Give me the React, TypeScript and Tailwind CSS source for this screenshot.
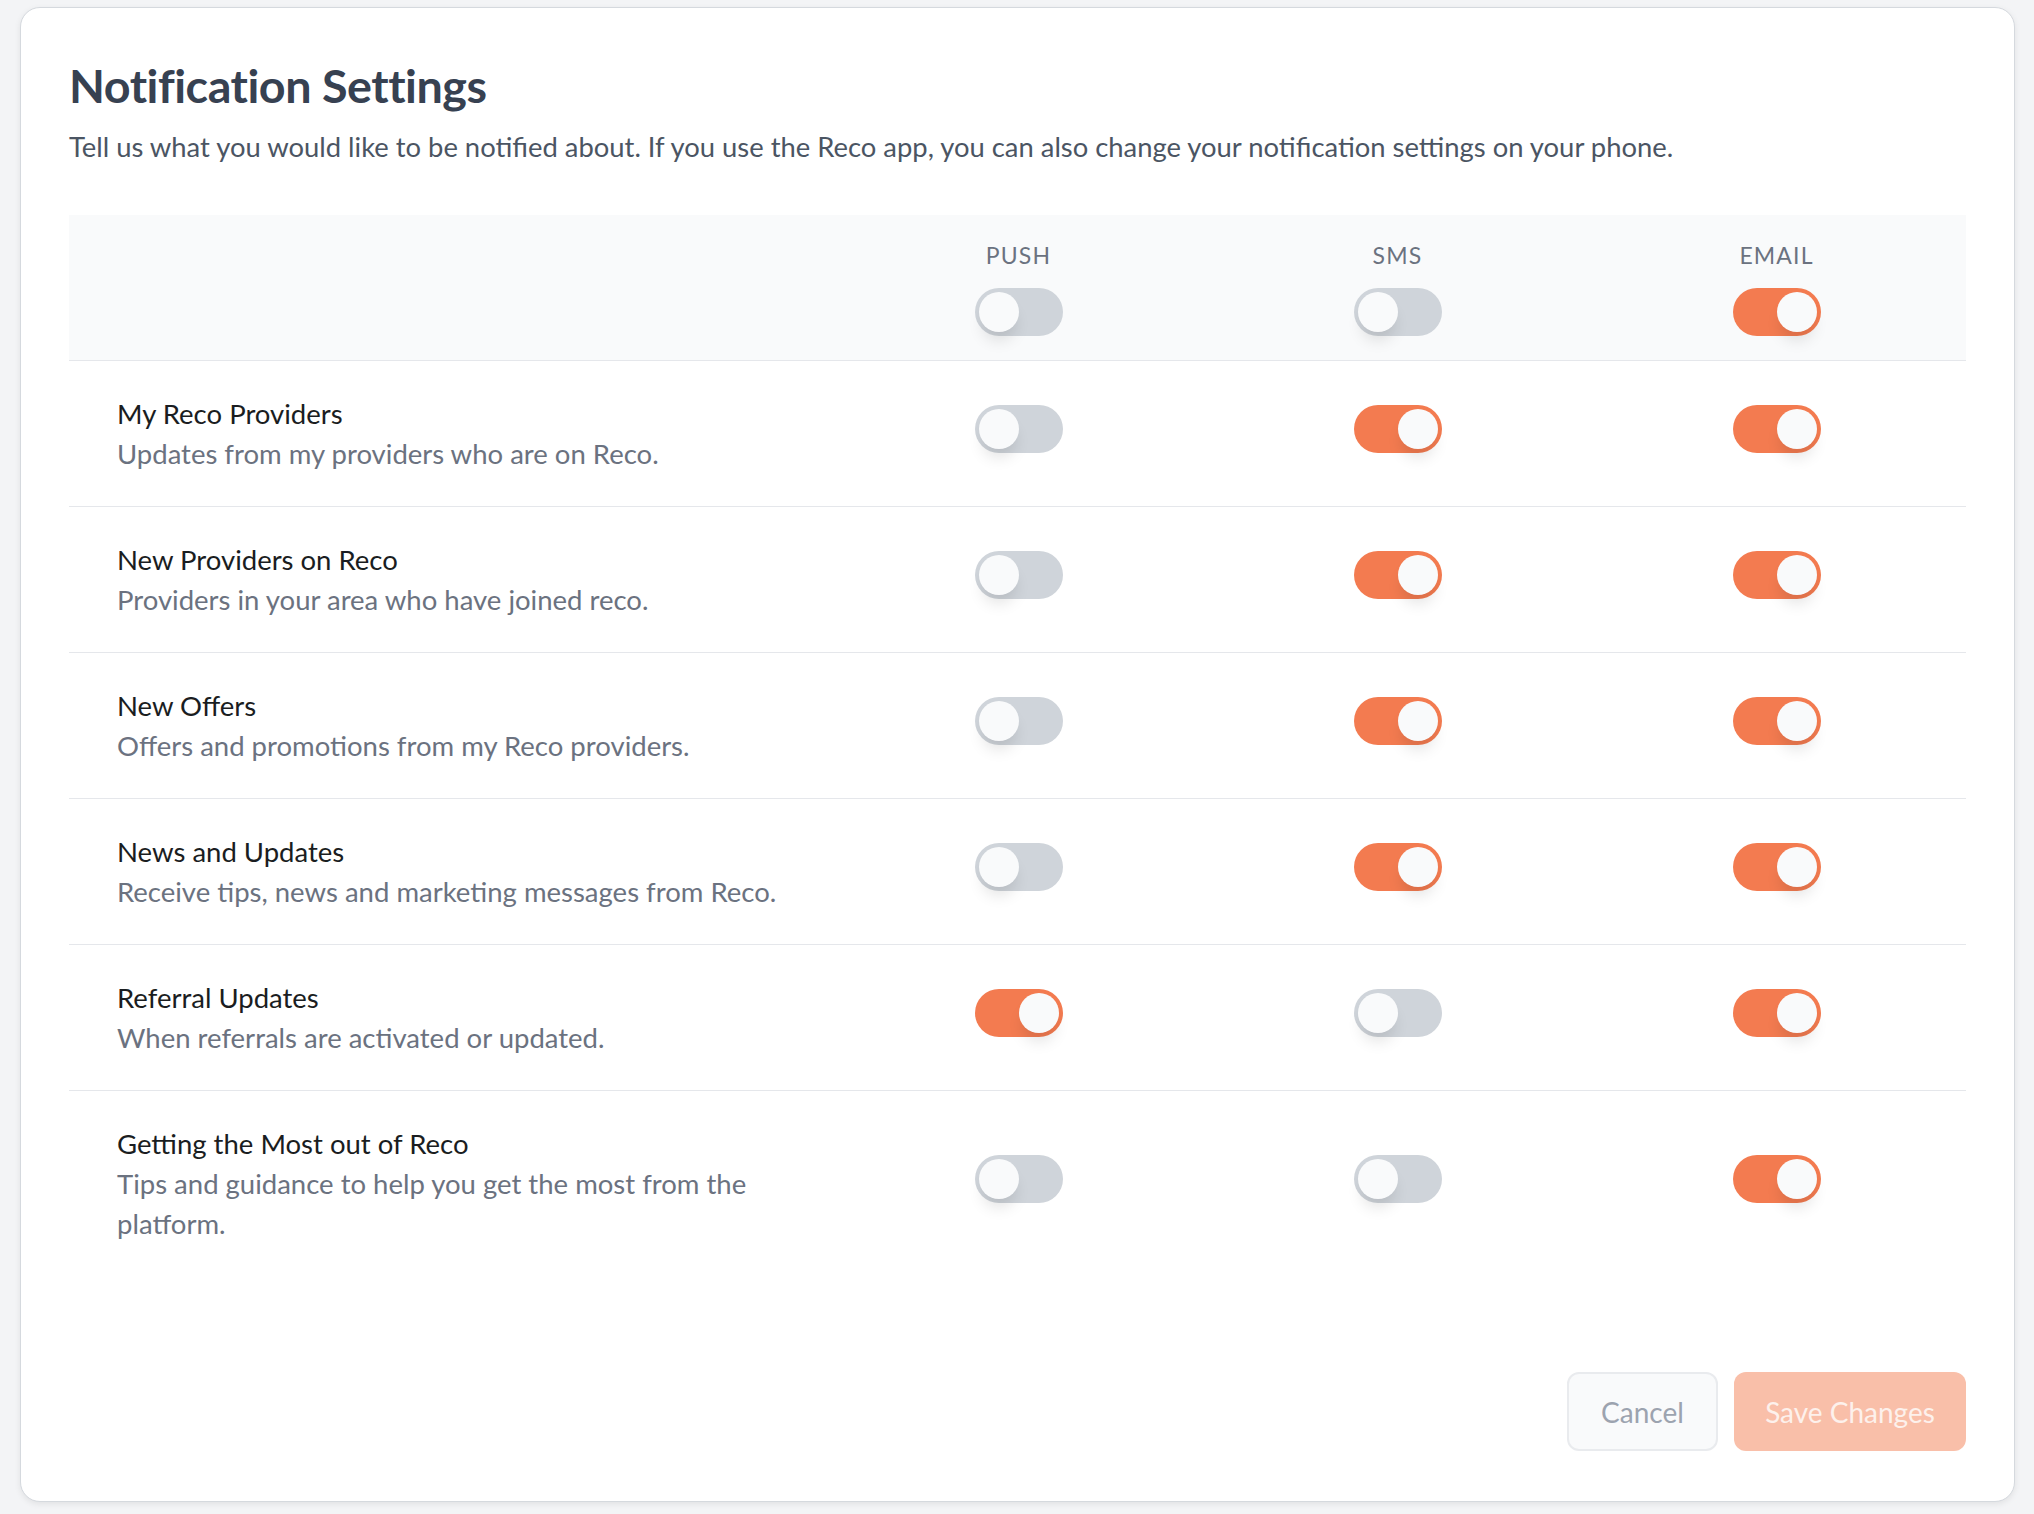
import { useState } from "react";

type Channel = "push" | "sms" | "email";

const rows: { title: string; desc: string; push: boolean; sms: boolean; email: boolean }[] = [
  { title: "My Reco Providers", desc: "Updates from my providers who are on Reco.", push: false, sms: true, email: true },
  { title: "New Providers on Reco", desc: "Providers in your area who have joined reco.", push: false, sms: true, email: true },
  { title: "New Offers", desc: "Offers and promotions from my Reco providers.", push: false, sms: true, email: true },
  { title: "News and Updates", desc: "Receive tips, news and marketing messages from Reco.", push: false, sms: true, email: true },
  { title: "Referral Updates", desc: "When referrals are activated or updated.", push: true, sms: false, email: true },
  {
    title: "Getting the Most out of Reco",
    desc: "Tips and guidance to help you get the most from the platform.",
    push: false,
    sms: false,
    email: true,
  },
];

function Toggle({ on, onChange }: { on: boolean; onChange: () => void }) {
  return (
    <button
      type="button"
      onClick={onChange}
      className={
        "flex h-[48px] w-[88px] items-center rounded-full p-[4px] mb-[10px] " +
        (on ? "bg-[#f37b50] justify-end" : "bg-[#cfd4da] justify-start")
      }
    >
      <span className="block h-[40px] w-[40px] rounded-full bg-[#f9fafb] shadow-[0_12px_16px_-4px_rgba(0,0,0,0.12)]" />
    </button>
  );
}

export default function App() {
  const [data, setData] = useState(rows);
  const [header, setHeader] = useState({ push: false, sms: false, email: true });

  const flip = (i: number, key: Channel) => {
    setData((d) => d.map((r, j) => (j === i ? { ...r, [key]: !r[key] } : r)));
  };

  return (
    <div className="min-h-screen bg-[#f3f4f6] pl-[20px] pr-[19px] pt-[7px] font-['Lato',sans-serif]">
      <div className="flex h-[1495px] flex-col rounded-[20px] border border-[#d5d9de] bg-white px-12 pt-12 pb-[50px] shadow-[0_2px_6px_rgba(0,0,0,0.08)]">
        <h1 className="pt-[2px] text-[46.7px] font-bold leading-[55px] tracking-[-0.01em] text-[#374151]">Notification Settings</h1>
        <p className="mt-[14px] text-[27.4px] leading-[40px] text-[#4b5563]">
          Tell us what you would like to be notified about. If you use the Reco app, you can also change your
          notification settings on your phone.
        </p>

        <div className="mt-12">
          <div className="grid grid-cols-[760px_1fr_1fr_1fr] border-b border-[#e5e7eb] bg-[#f9fafb] pt-[26px] pb-[14px]">
            <div />
            {(["push", "sms", "email"] as Channel[]).map((k) => (
              <div key={k} className="flex flex-col items-center">
                <span className="text-[23px] leading-[28px] tracking-[0.05em] text-[#6b7280] uppercase">{k}</span>
                <div className="mt-[19px]">
                  <Toggle on={header[k]} onChange={() => setHeader((h) => ({ ...h, [k]: !h[k] }))} />
                </div>
              </div>
            ))}
          </div>

          {data.map((r, i) => (
            <div
              key={r.title}
              className={
                "grid grid-cols-[760px_1fr_1fr_1fr] items-center pt-[33px] pb-8 " +
                (i < data.length - 1 ? "border-b border-[#e5e7eb]" : "")
              }
            >
              <div className="pl-12 pr-6 text-[27.5px] leading-[40px]">
                <div className="text-[#1a1d21]">{r.title}</div>
                <div className="text-[#6b7280]">{r.desc}</div>
              </div>
              {(["push", "sms", "email"] as Channel[]).map((k) => (
                <div key={k} className="flex justify-center">
                  <Toggle on={r[k]} onChange={() => flip(i, k)} />
                </div>
              ))}
            </div>
          ))}
        </div>

        <div className="mt-auto flex justify-end gap-4">
          <button
            type="button"
            className="h-[79px] w-[151px] rounded-[12px] border-2 border-[#e9ebee] bg-[#f9fafb] text-[28px] text-[#9ca3af]"
          >
            Cancel
          </button>
          <button
            type="button"
            className="h-[79px] w-[232px] rounded-[12px] bg-[#f9bfa9] text-[28px] text-[#fdf1ec]"
          >
            Save Changes
          </button>
        </div>
      </div>
    </div>
  );
}
